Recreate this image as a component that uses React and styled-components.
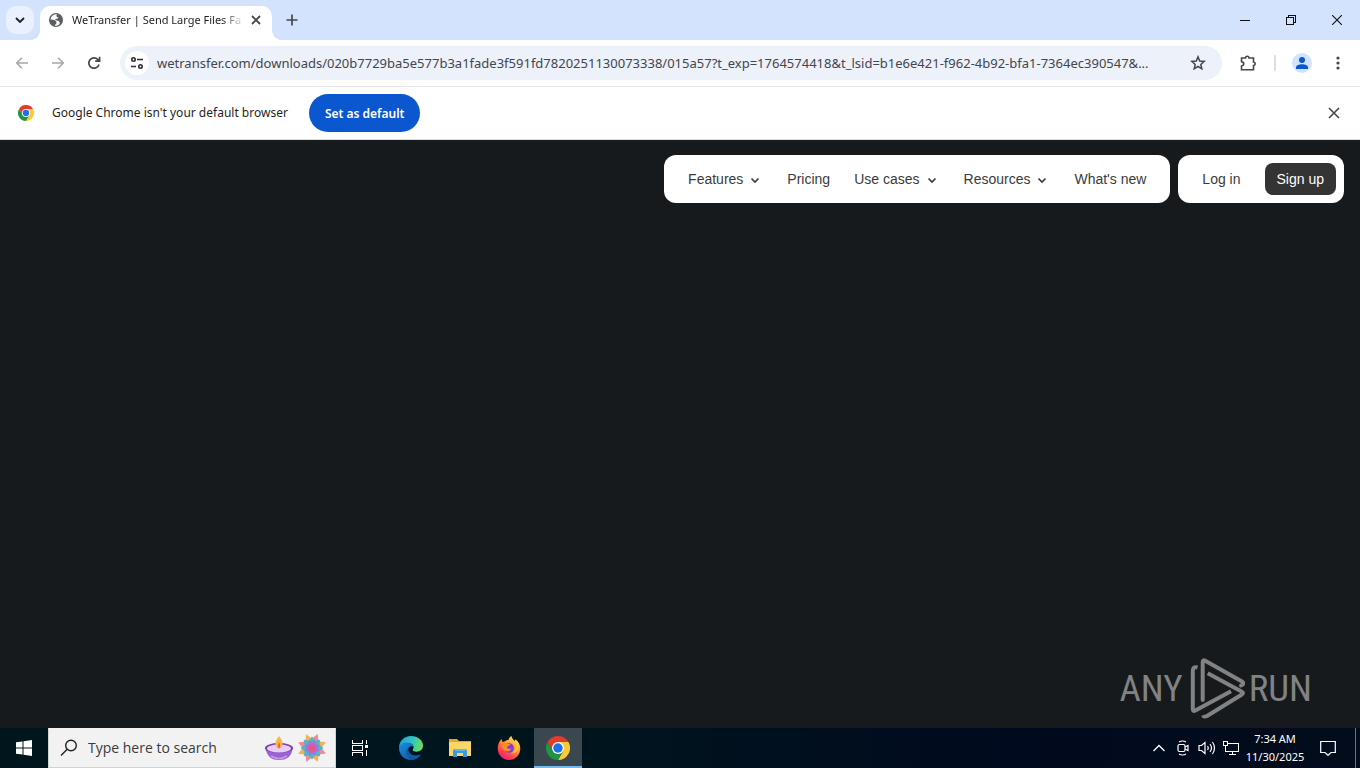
import React from "react";
import styled, { createGlobalStyle, css } from "styled-components";

const ui = `"Noto Sans", "Open Sans", sans-serif`;
const site = `"Liberation Sans", Arial, sans-serif`;

const GlobalStyle = createGlobalStyle`
  *, *::before, *::after { box-sizing: border-box; }
  body { margin: 0; font-family: ${ui}; background: #171a1c; }
  button, input { font: inherit; color: inherit; border: 0; margin: 0; padding: 0; background: none; }
  svg { display: block; flex: none; }
`;

const Screen = styled.div`
  display: flex;
  flex-direction: column;
  min-height: 100vh;
`;

/* Browser window */

const TabStrip = styled.header`
  display: flex;
  align-items: center;
  height: 40px;
  padding-left: 6px;
  background: #d3e3fd;
`;

const TabSearch = styled.button`
  display: grid;
  place-items: center;
  width: 28px;
  height: 28px;
  border-radius: 10px;
  background: #e9f0fe;
  color: #1f1f1f;
`;

const Tab = styled.div`
  position: relative;
  display: flex;
  align-items: center;
  align-self: flex-end;
  width: 232px;
  height: 34px;
  margin-left: 6px;
  padding: 0 8px 6px;
  border-radius: 10px 10px 0 0;
  background: #fff;
  color: #1f1f1f;

  &::before, &::after {
    content: "";
    position: absolute;
    bottom: 0;
    width: 10px;
    height: 10px;
  }
  &::before {
    right: 100%;
    background: radial-gradient(circle at 0 0, transparent 10px, #fff 10px);
  }
  &::after {
    left: 100%;
    background: radial-gradient(circle at 100% 0, transparent 10px, #fff 10px);
  }
`;

const TabTitle = styled.span`
  flex: 1;
  min-width: 0;
  margin-left: 8px;
  white-space: nowrap;
  font-size: 11px;
  line-height: 18px;
  mask-image: linear-gradient(90deg, #000 85%, transparent 98%);
`;

const IconButton = styled.button`
  display: grid;
  place-items: center;
  flex: none;
  width: ${(p) => p.$size || 28}px;
  height: ${(p) => p.$size || 28}px;
  border-radius: 50%;
  color: ${(p) => (p.$faded ? "#a6a6a6" : "#474747")};
`;

const NewTab = styled(IconButton)`
  margin-left: 6px;
`;

const WindowControls = styled.div`
  display: flex;
  align-self: stretch;
  margin-left: auto;
`;

const WindowButton = styled.button`
  display: grid;
  place-items: center;
  width: 46px;
  color: #111;
`;

const Toolbar = styled.div`
  display: flex;
  align-items: center;
  height: 47px;
  padding: 0 8px;
  gap: 8px;
  border-bottom: 1px solid #e2e3e6;
  background: #fff;
`;

const AddressBar = styled.div`
  display: flex;
  align-items: center;
  flex: 1;
  min-width: 0;
  height: 34px;
  margin: 0 4px;
  padding: 0 10px 0 5px;
  border-radius: 17px;
  background: #edf1fa;
`;

const SiteInfo = styled.button`
  display: grid;
  place-items: center;
  flex: none;
  width: 24px;
  height: 24px;
  border-radius: 50%;
  background: #fff;
  color: #2c2d30;
`;

const UrlInput = styled.input`
  flex: 1;
  min-width: 0;
  margin: 0 8px;
  font-size: 13px;
  line-height: 20px;
  color: #43464c;
  outline: 0;
`;

const Divider = styled.span`
  width: 2px;
  height: 16px;
  margin: 0 4px;
  background: #d9e0ec;
`;

const Avatar = styled.button`
  display: grid;
  place-items: center;
  width: 20px;
  height: 20px;
  margin: 0 4px;
  border-radius: 50%;
  background: #d3e3fd;
  color: #0b57d0;
`;

const InfoBar = styled.div`
  display: flex;
  align-items: center;
  height: 53px;
  padding: 0 12px 0 18px;
  border-bottom: 1px solid #dcdde0;
  background: #fff;
  color: #1f1f1f;
`;

const InfoText = styled.p`
  margin: 0 21px 0 18px;
  font-size: 12px;
  line-height: 20px;
`;

const DefaultButton = styled.button`
  height: 38px;
  padding: 0 16px;
  border-radius: 19px;
  background: #0b57d0;
  color: #fff;
  font-size: 12px;
  font-weight: 600;
`;

const InfoClose = styled(IconButton)`
  margin-left: auto;
`;

/* Web page */

const Page = styled.main`
  flex: 1;
  display: flex;
  flex-direction: column;
  justify-content: space-between;
  align-items: flex-end;
  padding: 15px 16px 8px;
  background: #171a1c;
`;

const SiteHeader = styled.div`
  display: flex;
  gap: 8px;
  font-family: ${site};
  font-size: 14px;
  line-height: 20px;
  color: #3b3b3b;
`;

const Panel = styled.nav`
  display: flex;
  align-items: center;
  gap: 24px;
  height: 48px;
  padding: 0 ${(p) => (p.$tight ? 8 : 24)}px 0 24px;
  border-radius: 12px;
  background: #fff;
`;

const NavButton = styled.button`
  display: flex;
  align-items: center;
  gap: 4px;
`;

const NavLink = styled.a`
  color: inherit;
  text-decoration: none;
  ${(p) =>
    p.$solid &&
    css`
      padding: 6px 12px;
      border-radius: 8px;
      background: #343434;
      color: #fff;
    `}
`;

const Watermark = styled.div`
  display: flex;
  align-items: center;
  gap: 4px;
  margin-right: 32px;
  font-family: "Roboto Condensed", "Open Sans Condensed", "Liberation Sans", sans-serif;
  font-size: 37px;
  line-height: 62px;
  color: #808284;
`;

/* Taskbar */

const Taskbar = styled.footer`
  display: flex;
  align-items: stretch;
  height: 40px;
  background: linear-gradient(90deg, #00161d 0, #00141e 45%, #000a1e 75%, #020c1c 100%);
  color: #fff;
`;

const TaskButton = styled.button`
  display: grid;
  place-items: center;
  width: ${(p) => p.$width || 48}px;
  ${(p) =>
    p.$active &&
    css`
      background: #3a474f;
      border-bottom: 2px solid #76b9ed;
      padding-top: 2px;
    `}
`;

const SearchBox = styled.label`
  display: flex;
  align-items: center;
  width: 288px;
  padding: 0 8px 0 11px;
  border: 1px solid #d0d2d3;
  border-top-color: #f2f2f2;
  background: #f2f2f2;
  color: #222;
`;

const SearchInput = styled.input`
  flex: 1;
  min-width: 0;
  margin-left: 10px;
  font-family: "Open Sans", sans-serif;
  font-size: 14px;
  line-height: 20px;
  outline: 0;
  &::placeholder { color: #3b3b3b; opacity: 1; }
`;

const SearchArt = styled.span`
  display: flex;
  align-items: center;
  gap: 4px;
`;

const AppList = styled.div`
  display: flex;
  gap: 1px;
  margin-left: 3px;
`;

const Tray = styled.div`
  display: flex;
  margin-left: auto;
`;

const Clock = styled.time`
  display: flex;
  flex-direction: column;
  justify-content: center;
  width: 64px;
  text-align: center;
  font-size: 11px;
  line-height: 18px;
  white-space: nowrap;
`;

const ShowDesktop = styled.button`
  width: 5px;
  margin-left: 6px;
  border-left: 1px solid #6c737c;
`;

const Svg = ({ s = 16, w = s, h = s, children, sw = 1.5, ...rest }) => (
  <svg width={w} height={h} viewBox={`0 0 ${w} ${h}`} fill="none" stroke="currentColor" strokeWidth={sw} aria-hidden="true" {...rest}>
    {children}
  </svg>
);

const ChromeLogo = ({ size }) => (
  <svg width={size} height={size} viewBox="0 0 48 48" aria-hidden="true">
    <path d="M3.200 12A24 24 0 0 1 44.800 12H24L13.600 30Z" fill="#e33b2e" />
    <path d="M44.800 12A24 24 0 0 1 24 48L34.400 30 24 12Z" fill="#fcc934" />
    <path d="M24 48A24 24 0 0 1 3.200 12L13.600 30H34.400Z" fill="#1e9444" />
    <circle cx="24" cy="24" r="12" fill="#fff" />
    <circle cx="24" cy="24" r="9.500" fill="#1a73e8" />
  </svg>
);

const CloseIcon = ({ s = 10, sw = 1.6 }) => (
  <Svg s={s} sw={sw}><path d={`M1 1 ${s - 1} ${s - 1}M${s - 1} 1 1 ${s - 1}`} /></Svg>
);

const Chevron = () => (
  <Svg s={16} sw={1.7}><path d="m4.500 7.500 3.500 3.500 3.500-3.500" /></Svg>
);

const GlobeIcon = () => (
  <svg width="16" height="16" viewBox="0 0 16 16" aria-hidden="true">
    <circle cx="8" cy="8" r="7" fill="#5b5e63" />
    <path d="M8.800 2.300c-2.600-.4-4.800 1-5.700 3.100l-.6 2.300 3 .1c1.600.2 1.500 1.500 2.900 1.600v2.200l-1.500 1.100v1.100l2.200-.1 2.200-1.300.6-1.900-1.700-1.800-2.800-.4V6.700h2l1.200-1.200-1.500-.2-.7-1.400Z" fill="#fff" />
    <path d="M2.500 7.500c2 .6 3.500.5 4 2.300.4 1.300 1.400 1.200.5 3.600-2.500-.3-4.500-2.700-4.500-5.900Z" fill="#5b5e63" />
  </svg>
);

const DiyaIcon = () => (
  <svg width="28" height="26" viewBox="0 0 28 26" aria-hidden="true">
    <path d="M0 13c3 9 6 12 14 12s12-3 14-12Z" fill="#9b62d2" />
    <ellipse cx="14" cy="13" rx="14" ry="5" fill="#7a42b5" />
    <ellipse cx="14" cy="13.500" rx="12" ry="4" fill="#e9cdf5" />
    <path d="M14 1c3 4 5 7 2 12h-4c-3-4-1-8 2-12Z" fill="#f7b64a" />
    <path d="M14 7c1.500 3 1.500 5 0 7-1.500-2-1-5 0-7Z" fill="#e56a2a" />
    <path d="M6 21c5 3 11 3 16 0" stroke="#c995ee" strokeWidth="1.500" fill="none" />
  </svg>
);

const ring = (n) => Array.from({ length: n }, (_, i) => (i * 360) / n);

const RangoliIcon = () => (
  <svg width="30" height="30" viewBox="-15 -15 30 30" aria-hidden="true">
    {ring(8).map((a) => (
      <path key={a} d="M0-15 4-8 0-4-4-8Z" fill={a % 90 ? "#f6b04e" : "#f08a95"} transform={`rotate(${a + 22})`} />
    ))}
    {ring(8).map((a) => (
      <path key={a} d="M0-11.500 4-6 0 0-4-6Z" fill="#4bb3d3" transform={`rotate(${a})`} />
    ))}
    {ring(8).map((a) => (
      <path key={a} d="M0-8 2.500-4 0 0-2.500-4Z" fill="#b06fc9" transform={`rotate(${a + 22})`} />
    ))}
    <circle r="3.500" fill="#e0559b" />
    <circle r="1.500" fill="#ee5a5c" />
  </svg>
);

const EdgeIcon = () => (
  <svg width="24" height="24" viewBox="0 0 24 24" aria-hidden="true">
    <defs>
      <linearGradient id="edgeTop" x1="0" x2="1" y1="0.300" y2="0.500">
        <stop offset="0" stopColor="#1f9de0" />
        <stop offset="0.500" stopColor="#2cc3c4" />
        <stop offset="1" stopColor="#6bdf5a" />
      </linearGradient>
      <linearGradient id="edgeBase" x1="0" x2="1" y1="0" y2="1">
        <stop offset="0" stopColor="#1b8fdf" />
        <stop offset="1" stopColor="#0c4a9c" />
      </linearGradient>
    </defs>
    <path d="M0 12C0 5 5 0 12 0s12 4.500 12 9.500c0 4-3 6.200-6.400 6.200-2.600 0-4-.9-4-1.700 0-.6 1-1 1-2.800 0-2.100-2.200-4.200-5.600-4.200C5 7 1.500 8.500 0 12Z" fill="url(#edgeTop)" />
    <path d="M0 12c1-4 4.500-5.500 8-5.500 4 0 6.600 2.200 6.600 4.700-2-2.200-5.600-.8-5.600 2.800 0 4.500 5.500 8 12.800 4.500C19.500 22 16 24 12 24 5 24 0 18.500 0 12Z" fill="url(#edgeBase)" />
    <path d="M9.500 11.500C5 15 7.500 22.500 14 23.800 17.500 23 20 21.500 21.800 18.500 14.500 21.500 8 17.500 9.500 11.500Z" fill="#0f5aa8" />
  </svg>
);

const FolderIcon = () => (
  <svg width="22" height="20" viewBox="0 0 22 20" aria-hidden="true">
    <path d="M0 1h8l2 2h12v4H0Z" fill="#e5a82c" />
    <path d="M0 4h22v14H0Z" fill="#fbd667" />
    <path d="M4 19v-6q0-2 2-2h10q2 0 2 2v6h-4v-4H8v4Z" fill="#3f9bd8" />
    <path d="M6 11h10v2H6Z" fill="#64b7e8" />
  </svg>
);

const FirefoxIcon = () => (
  <svg width="24" height="24" viewBox="0 0 24 24" aria-hidden="true">
    <defs>
      <linearGradient id="foxBody" x1="0.800" x2="0.200" y1="0" y2="1">
        <stop offset="0" stopColor="#fff15a" />
        <stop offset="0.400" stopColor="#ff9a2e" />
        <stop offset="0.750" stopColor="#ff3d51" />
        <stop offset="1" stopColor="#e3188c" />
      </linearGradient>
    </defs>
    <path d="M4.500 3 5.500 6 8 5.300C9 4.500 10 4 11.500 4 11.700 2 13 1 14.500 0c.3 2.600 2 3.800 3.200 5 .8-.2.800-1 .6-1.800 3.200 2 5 5.500 5 9C23.300 18.800 18.500 24 12 24 5.500 24 .7 18.800.7 12.600.7 9 2 5.500 4.500 3Z" fill="url(#foxBody)" />
    <circle cx="12" cy="12" r="4.800" fill="#7b3fd4" />
    <path d="M4.500 7.500c2-1.500 4-1.500 6 .6h3c-.5 1.800-3.500 2-3.500 3 0 1.500 2 2.400 4.500 1.200-1 3-4 4-6.500 2.500-2-1.200-3.500-4-3.500-7.300Z" fill="#ff8a2b" />
    <path d="M14.500 0c.3 3 4.500 5 4.500 9.500 0 4-2.500 7-5 8 6 .5 8.500-5 7-10l-2.700-4.300c.2.800.2 1.600-.6 1.800-1.200-1.200-2.900-2.400-3.200-5Z" fill="#ffcf3d" opacity="0.800" />
  </svg>
);

const PlayMark = () => (
  <svg width="58" height="62" viewBox="0 0 58 62" fill="none" stroke="currentColor" strokeWidth="4" strokeLinejoin="round" strokeLinecap="round" aria-hidden="true">
    <path d="M15.700 42V4q0-2.500 2.500-1.300L55 23.500q3 2.500-1 4" />
    <path d="M20.700 15.300 54.500 33.500q3 1.500 0 3.200L20 58q-3 1.500-4-.8" strokeLinecap="butt" />
    <path d="M10.500 9.500Q5.800 8 5.800 13V51q0 3 2.500 1.600L44 33.200" strokeLinecap="butt" />
  </svg>
);

const menus = [
  { label: "Features", menu: true },
  { label: "Pricing" },
  { label: "Use cases", menu: true },
  { label: "Resources", menu: true },
  { label: "What's new" },
];

export default function App() {
  return (
    <Screen>
      <GlobalStyle />
      <TabStrip>
        <TabSearch aria-label="Search tabs">
          <Svg s={10} sw={1.8}><path d="m1 3 4 4 4-4" /></Svg>
        </TabSearch>
        <Tab>
          <GlobeIcon />
          <TabTitle>WeTransfer | Send Large Files Fa</TabTitle>
          <IconButton $size={16} aria-label="Close tab"><CloseIcon sw={1.8} /></IconButton>
        </Tab>
        <NewTab aria-label="New tab">
          <Svg s={12} sw={1.7}><path d="M6 .5v11M.5 6h11" /></Svg>
        </NewTab>
        <WindowControls>
          <WindowButton aria-label="Minimize"><Svg s={10} sw={1} shapeRendering="crispEdges"><path d="M0 5.500h10" /></Svg></WindowButton>
          <WindowButton aria-label="Restore"><Svg s={10} sw={1} shapeRendering="crispEdges"><path d="M.5 2.500h7v7h-7ZM2.500 2.500v-2h7v7h-2" /></Svg></WindowButton>
          <WindowButton aria-label="Close window"><Svg s={10} sw={1.1}><path d="m0 0 10 10M10 0 0 10" /></Svg></WindowButton>
        </WindowControls>
      </TabStrip>

      <Toolbar>
        <IconButton $faded aria-label="Back"><Svg s={14}><path d="M13 7H2M7 1.700 1.700 7 7 12.300" /></Svg></IconButton>
        <IconButton $faded aria-label="Forward"><Svg s={14}><path d="M1 7H12M7 1.700 12.300 7 7 12.300" /></Svg></IconButton>
        <IconButton aria-label="Reload"><Svg s={14} sw={1.7}><path d="M12 8.500A5.200 5.200 0 1 1 10.700 3.300L12.300 5M12.600.8V5.200H8.200" /></Svg></IconButton>
        <AddressBar>
          <SiteInfo aria-label="View site information">
            <Svg s={14} sw={1.6}>
              <circle cx="3.500" cy="3.500" r="1.700" /><path d="M7 3.500h6M1 10.500h5" /><circle cx="10.500" cy="10.500" r="1.700" />
            </Svg>
          </SiteInfo>
          <UrlInput
            aria-label="Address"
            readOnly
            value="wetransfer.com/downloads/020b7729ba5e577b3a1fade3f591fd7820251130073338/015a57?t_exp=1764574418&t_lsid=b1e6e421-f962-4b92-bfa1-7364ec390547&..."
          />
          <IconButton aria-label="Bookmark this tab">
            <Svg s={16} sw={1.5}><path d="m8 1.800 1.700 4.200 4.500.4-3.400 3 1 4.400L8 11.500l-3.800 2.300 1-4.400-3.400-3L6.300 6Z" /></Svg>
          </IconButton>
        </AddressBar>
        <IconButton aria-label="Extensions">
          <Svg s={18} sw={1.6}>
            <path d="M2.500 4H6.500q0-1.700 1.700-1.700T10 4h4.500v4q1.700.2 1.700 1.700T14.500 11.500v4.300h-12v-3.800q2.200-.4 2.200-2.200T2.500 7.600Z" />
          </Svg>
        </IconButton>
        <Divider />
        <Avatar aria-label="Profile">
          <svg width="14" height="14" viewBox="0 0 14 14" fill="currentColor" aria-hidden="true"><circle cx="7" cy="4" r="3" /><path d="M1 13v-1.500C1 9.500 4 8.300 7 8.300s6 1.200 6 3.200V13Z" /></svg>
        </Avatar>
        <IconButton aria-label="Menu">
          <svg width="4" height="16" viewBox="0 0 4 16" fill="currentColor" aria-hidden="true"><circle cx="2" cy="3" r="1.600" /><circle cx="2" cy="8" r="1.600" /><circle cx="2" cy="13" r="1.600" /></svg>
        </IconButton>
      </Toolbar>

      <InfoBar>
        <ChromeLogo size={16} />
        <InfoText>Google Chrome isn't your default browser</InfoText>
        <DefaultButton>Set as default</DefaultButton>
        <InfoClose aria-label="Dismiss"><CloseIcon s={12} sw={1.6} /></InfoClose>
      </InfoBar>

      <Page>
        <SiteHeader>
          <Panel aria-label="Main">
            {menus.map((m) =>
              m.menu ? (
                <NavButton key={m.label}>{m.label}<Chevron /></NavButton>
              ) : (
                <NavLink key={m.label} href="#">{m.label}</NavLink>
              )
            )}
          </Panel>
          <Panel $tight aria-label="Account">
            <NavLink href="#">Log in</NavLink>
            <NavLink href="#" $solid>Sign up</NavLink>
          </Panel>
        </SiteHeader>
        <Watermark>
          <span>ANY</span>
          <PlayMark />
          <span>RUN</span>
        </Watermark>
      </Page>

      <Taskbar>
        <TaskButton aria-label="Start">
          <svg width="16" height="16" viewBox="0 0 16 16" fill="#fff" aria-hidden="true"><path d="M0 2.300 6.500 1.400V7.500H0ZM7.500 1.200 16 0v7.500H7.500ZM0 8.500h6.500v6.100L0 13.700ZM7.500 8.500H16V16l-8.500-1.200Z" /></svg>
        </TaskButton>
        <SearchBox>
          <Svg s={18} sw={1.4}><circle cx="11" cy="6.500" r="5.300" /><path d="M7.200 10.300 1 16.500" /></Svg>
          <SearchInput aria-label="Search" placeholder="Type here to search" />
          <SearchArt>
            <DiyaIcon />
            <RangoliIcon />
          </SearchArt>
        </SearchBox>
        <TaskButton aria-label="Task view">
          <Svg s={18} sw={1} shapeRendering="crispEdges">
            <path d="M1.500 1v3.500h10V1M1.500 17v-3.500h10V17M1.500 6.500h10v5h-10ZM15.500 1v4M15.500 11v6" /><path d="M14 6h3v3h-3Z" fill="currentColor" stroke="none" />
          </Svg>
        </TaskButton>
        <AppList>
          <TaskButton aria-label="Edge"><EdgeIcon /></TaskButton>
          <TaskButton aria-label="File Explorer"><FolderIcon /></TaskButton>
          <TaskButton aria-label="Firefox"><FirefoxIcon /></TaskButton>
          <TaskButton $active aria-label="Chrome"><ChromeLogo size={24} /></TaskButton>
        </AppList>
        <Tray>
          <TaskButton $width={24} aria-label="Show hidden icons"><Svg w={12} h={8} sw={1.3}><path d="m.5 7 5.500-5.500L11.500 7" /></Svg></TaskButton>
          <TaskButton $width={24} aria-label="Meet now">
            <Svg s={16} sw={1.2}><rect x="3" y="4.500" width="7" height="7" rx="1.500" /><path d="m10 7 3-1.500v5L10 9M4 2q3.500-2 7 0M4 14q3.500 2 7 0" /></Svg>
          </TaskButton>
          <TaskButton $width={24} aria-label="Volume">
            <Svg w={18} h={16} sw={1.2}><path d="M1 5.500h2.500L7 2.500v11l-3.500-3H1ZM9.500 6q1.500 2 0 4M12 4q3 4 0 8M14.500 2q4 6 0 12" /></Svg>
          </TaskButton>
          <TaskButton $width={24} aria-label="Network">
            <Svg s={16} sw={1} shapeRendering="crispEdges"><path d="M5 3.500h10.500v8H2.500V6M9.500 12v3M6 14.500h7M.5 1.500h4v4h-4Z" /></Svg>
          </TaskButton>
          <Clock><span>7:34 AM</span><span>11/30/2025</span></Clock>
          <TaskButton $width={42} aria-label="Notifications">
            <Svg w={16} h={16} sw={1.2}><path d="M.7 1.500h14.600v11H11L8 15.300 5 12.500H.7Z" /></Svg>
          </TaskButton>
          <ShowDesktop aria-label="Show desktop" />
        </Tray>
      </Taskbar>
    </Screen>
  );
}
